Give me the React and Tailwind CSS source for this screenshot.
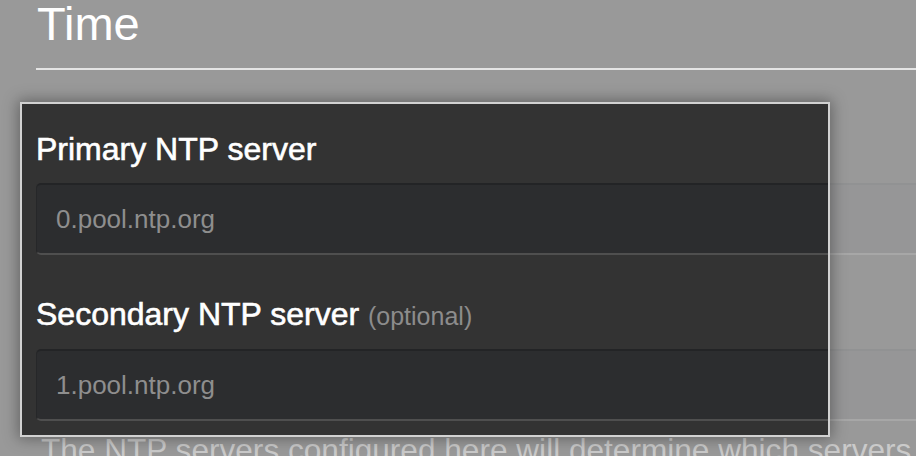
import React from "react";

export default function App() {
  return (
    <div
      className="relative w-[916px] h-[456px] overflow-hidden bg-[#333333]"
      style={{ fontFamily: '"Liberation Sans", Arial, sans-serif' }}
    >
      <div className="pl-[36px] w-[1100px]">
        <h1 className="text-[47px] leading-none text-white font-normal pl-[1px]">Time</h1>
        <div className="mt-[21px] border-t-2 border-[#c8c8c8]" />

        <label className="block mt-[63px] text-[32px] leading-none font-normal text-white [-webkit-text-stroke:0.6px_white]">
          Primary NTP server
        </label>
        <input
          readOnly
          placeholder="0.pool.ntp.org"
          className="block mt-[18px] w-full h-[72px] rounded-[5px] bg-[#2c2d2f] border border-[#262729] border-t-2 border-t-[#232426] border-b-2 border-b-[#4f4f4f] pl-[19px] text-[26px] text-[#8e8e8e] placeholder:text-[#8e8e8e] outline-none"
        />

        <label className="block mt-[43px] text-[32px] leading-none font-normal text-white">
          <span className="[-webkit-text-stroke:0.6px_white]">Secondary NTP server</span>{" "}
          <span className="text-[25px] font-normal text-[#8c8c8c]">(optional)</span>
        </label>
        <input
          readOnly
          placeholder="1.pool.ntp.org"
          className="block mt-[19px] w-full h-[72px] rounded-[5px] bg-[#2c2d2f] border border-[#262729] border-t-2 border-t-[#232426] border-b-2 border-b-[#4f4f4f] pl-[19px] text-[26px] text-[#8e8e8e] placeholder:text-[#8e8e8e] outline-none"
        />

        <p className="mt-[14px] pl-[5px] text-[31.6px] leading-none text-[#949494] whitespace-nowrap">
          The NTP servers configured here will determine which servers are used to synchronize the time.
        </p>
      </div>

      <div className="pointer-events-none absolute left-[20px] top-[102px] w-[810px] h-[335px] border-2 border-[#d2d2d2] shadow-[0_0_14px_2px_rgba(0,0,0,0.35),0_0_0_2000px_rgba(255,255,255,0.5)]" />
    </div>
  );
}
